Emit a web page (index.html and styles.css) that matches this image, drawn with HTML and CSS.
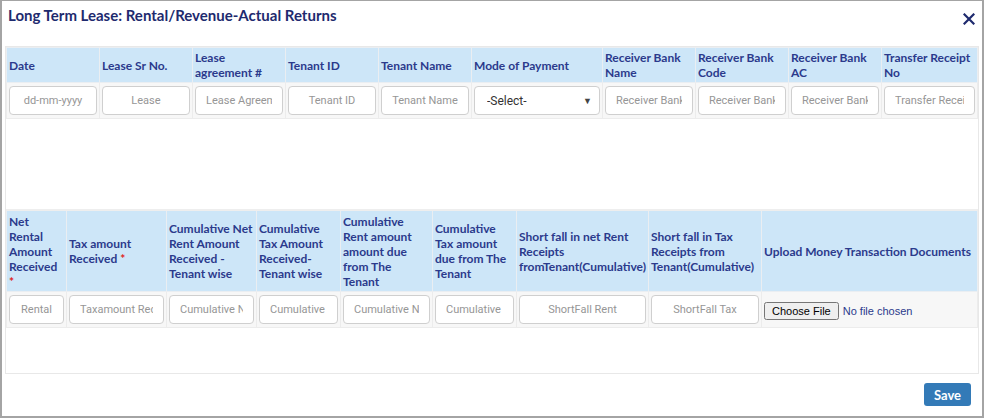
FILE: index.html
```html
<!DOCTYPE html>
<html>
<head>
<meta charset="utf-8">
<link rel="stylesheet" href="styles.css">
</head>
<body>
<div class="modal">
  <div class="modal-header">
    <h4 class="title">Long Term Lease: Rental/Revenue-Actual Returns</h4>
    <button class="close" type="button" aria-label="Close">
      <svg width="12" height="12" viewBox="0 0 12 12"><path d="M1.5 1.5 L10.5 10.5 M10.5 1.5 L1.5 10.5" stroke="#1e2a6e" stroke-width="2.2" stroke-linecap="square" fill="none"/></svg>
    </button>
  </div>
  <div class="panel">
    <table class="grid grid-1">
      <colgroup>
        <col class="c93"><col class="c93"><col class="c93"><col class="c93"><col class="c93">
        <col class="c131"><col class="c93"><col class="c93"><col class="c93"><col>
      </colgroup>
      <thead>
        <tr>
          <th>Date</th>
          <th>Lease Sr No.</th>
          <th>Lease agreement #</th>
          <th>Tenant ID</th>
          <th>Tenant Name</th>
          <th>Mode of Payment</th>
          <th>Receiver Bank Name</th>
          <th>Receiver Bank Code</th>
          <th>Receiver Bank AC</th>
          <th>Transfer Receipt No</th>
        </tr>
      </thead>
      <tbody>
        <tr>
          <td><input class="field" type="text" placeholder="dd-mm-yyyy"></td>
          <td><input class="field" type="text" placeholder="Lease"></td>
          <td><input class="field" type="text" placeholder="Lease Agreement"></td>
          <td><input class="field" type="text" placeholder="Tenant ID"></td>
          <td><input class="field" type="text" placeholder="Tenant Name"></td>
          <td>
            <div class="select-wrap">
              <select class="field select"><option>-Select-</option></select>
              <span class="caret">&#9660;</span>
            </div>
          </td>
          <td><input class="field" type="text" placeholder="Receiver Bank Name"></td>
          <td><input class="field" type="text" placeholder="Receiver Bank Code"></td>
          <td><input class="field" type="text" placeholder="Receiver Bank AC"></td>
          <td><input class="field" type="text" placeholder="Transfer Receipt No"></td>
        </tr>
      </tbody>
    </table>

    <table class="grid grid-2">
      <colgroup>
        <col class="c60"><col class="c100"><col class="c90"><col class="c84"><col class="c92">
        <col class="c84"><col class="c132"><col class="c113"><col>
      </colgroup>
      <thead>
        <tr>
          <th>Net Rental Amount Received <span class="req">*</span></th>
          <th>Tax amount Received&nbsp;<span class="req">*</span></th>
          <th>Cumulative Net Rent Amount Received - Tenant wise</th>
          <th>Cumulative Tax Amount Received-Tenant wise</th>
          <th>Cumulative Rent amount amount due from The Tenant</th>
          <th>Cumulative Tax amount due from The Tenant</th>
          <th>Short fall in net Rent Receipts fromTenant(Cumulative)</th>
          <th>Short fall in Tax Receipts from Tenant(Cumulative)</th>
          <th>Upload Money Transaction Documents</th>
        </tr>
      </thead>
      <tbody>
        <tr>
          <td><input class="field" type="text" placeholder="Rental"></td>
          <td><input class="field" type="text" placeholder="Taxamount Received"></td>
          <td><input class="field" type="text" placeholder="Cumulative Net Rent"></td>
          <td><input class="field" type="text" placeholder="Cumulative Tax"></td>
          <td><input class="field" type="text" placeholder="Cumulative Net"></td>
          <td><input class="field" type="text" placeholder="Cumulative Tax"></td>
          <td><input class="field" type="text" placeholder="ShortFall Rent"></td>
          <td><input class="field" type="text" placeholder="ShortFall Tax"></td>
          <td class="file-cell"><input class="file" type="file"></td>
        </tr>
      </tbody>
    </table>
  </div>
  <div class="footer">
    <button class="btn-save" type="button">Save</button>
  </div>
</div>
</body>
</html>
```
FILE: styles.css
```css
html, body {
  margin: 0;
  padding: 0;
  background: #fff;
}
body {
  width: 984px;
  height: 418px;
  font-family: Lato, "Open Sans", sans-serif;
}
.modal {
  box-sizing: border-box;
  width: 984px;
  height: 418px;
  border: 2px solid #a4a4a4;
  border-top-width: 1px;
  padding: 0 3px;
  display: flex;
  flex-direction: column;
  background: #fff;
}
.modal-header {
  height: 45px;
  display: flex;
  justify-content: space-between;
  align-items: flex-start;
}
.title {
  margin: 0;
  padding: 5px 0 0 3px;
  font-size: 15px;
  line-height: 18px;
  font-weight: 700;
  color: #1e2a6e;
}
.close {
  margin: 12px 4px 0 0;
  padding: 0;
  border: 0;
  background: transparent;
  width: 12px;
  height: 12px;
  display: flex;
}
.panel {
  box-sizing: border-box;
  height: 328px;
  border: 1px solid #e8e8e8;
}
.grid {
  width: 100%;
  border-collapse: collapse;
  table-layout: fixed;
}
.grid-1 {
  margin-bottom: 90px;
}
.c60 { width: 60px; }
.c84 { width: 84px; }
.c90 { width: 90px; }
.c92 { width: 92px; }
.c93 { width: 93px; }
.c100 { width: 100px; }
.c113 { width: 113px; }
.c131 { width: 131px; }
.c132 { width: 132px; }
.grid th {
  background: #cde6f8;
  color: #2b3a8c;
  font-size: 12px;
  font-weight: 700;
  text-align: left;
  line-height: 15px;
  padding: 2px 2px 2px 2px;
  border: 1px solid #eaeef2;
  vertical-align: middle;
}
.grid-1 th { height: 29px; }
.grid-2 th { height: 76px; }
.grid-2 { border-top: 2px solid #eeeeee; }
.req { color: #e02020; font-weight: 700; }
.grid td {
  background: #f7f7f7;
  border: 1px solid #ececec;
  padding: 3px 2px;
  height: 29px;
}
.field {
  box-sizing: border-box;
  display: block;
  width: 100%;
  height: 29px;
  margin: 0;
  border: 1px solid #cfcfcf;
  border-radius: 4px;
  padding: 0 10px;
  text-align: center;
  font-family: Roboto, "Liberation Sans", sans-serif;
  font-size: 11px;
  color: #555;
  background: #fff;
}
.field::placeholder {
  color: #969696;
}
.select-wrap {
  position: relative;
}
.select {
  -webkit-appearance: none;
  appearance: none;
  text-align: left;
  padding-left: 12px;
  font-size: 12px;
  color: #333;
}
.caret {
  position: absolute;
  right: 8px;
  top: 10px;
  font-size: 9px;
  line-height: 9px;
  color: #444;
  pointer-events: none;
}
.file-cell {
  padding-left: 2px;
}
.file {
  font-family: "Liberation Sans", Arial, sans-serif;
  font-size: 11px;
  color: #2b3a8c;
}
.footer {
  display: flex;
  justify-content: flex-end;
  padding: 9px 8px 0 0;
}
.btn-save {
  width: 47px;
  height: 23px;
  border: 0;
  border-radius: 3px;
  background: #337ab7;
  color: #fff;
  font-family: Lato, sans-serif;
  font-size: 13px;
  font-weight: 700;
  padding: 0;
}
```
